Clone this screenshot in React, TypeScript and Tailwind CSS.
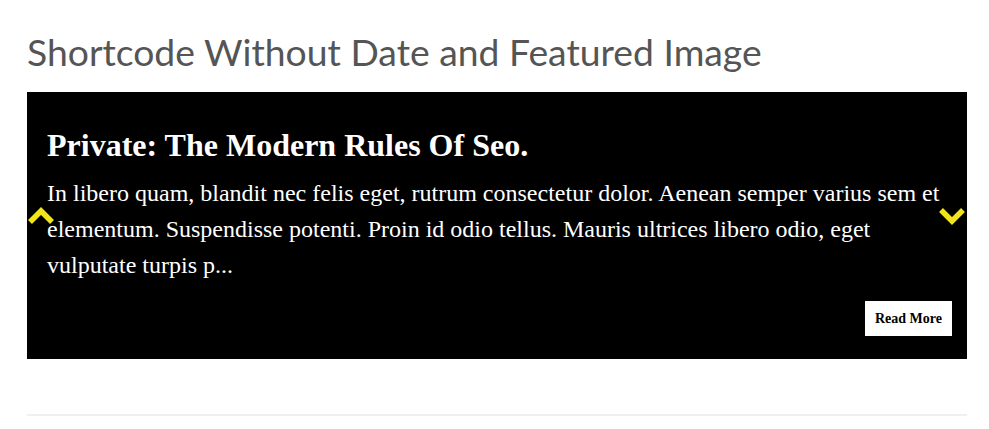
import React from 'react';

const Chevron = ({ up }: { up?: boolean }) => (
  <svg width="28" height="18" viewBox="0 0 28 18" className="block">
    <path
      d={up ? 'M3 15 L14 4 L25 15' : 'M3 3 L14 14 L25 3'}
      fill="none"
      stroke="#f2e41a"
      strokeWidth="5.5"
    />
  </svg>
);

export default function App() {
  return (
    <div className="w-[989px] h-[429px] bg-white pl-[27px] pr-[22px] pt-[30px] overflow-hidden">
      <h2 className="text-[37.3px] leading-[44px] text-[#555555] font-['Lato',sans-serif]">
        Shortcode Without Date and Featured Image
      </h2>
      <div className="relative mt-[18px] bg-black h-[267px] px-5 pt-[33px] font-['Liberation_Serif',serif]">
        <h3 className="text-[32px] leading-[40px] font-bold text-white">Private: The Modern Rules Of Seo.</h3>
        <p className="mt-[10px] text-[24px] leading-[36px] text-white">
          In libero quam, blandit nec felis eget, rutrum consectetur dolor. Aenean semper varius sem et elementum. Suspendisse potenti. Proin id odio tellus. Mauris ultrices libero odio, eget vulputate turpis p...
        </p>
        <div className="flex justify-end mt-[18px]">
          <button className="bg-white text-black text-[14px] font-bold h-[35px] px-[10px] mr-[-5px]">Read More</button>
        </div>
        <div className="absolute left-[0px] top-[115px]"><Chevron up /></div>
        <div className="absolute right-[1px] top-[115px]"><Chevron /></div>
      </div>
      <div className="mt-[55px] border-t-2 border-[#f0f0f0]" />
    </div>
  );
}
